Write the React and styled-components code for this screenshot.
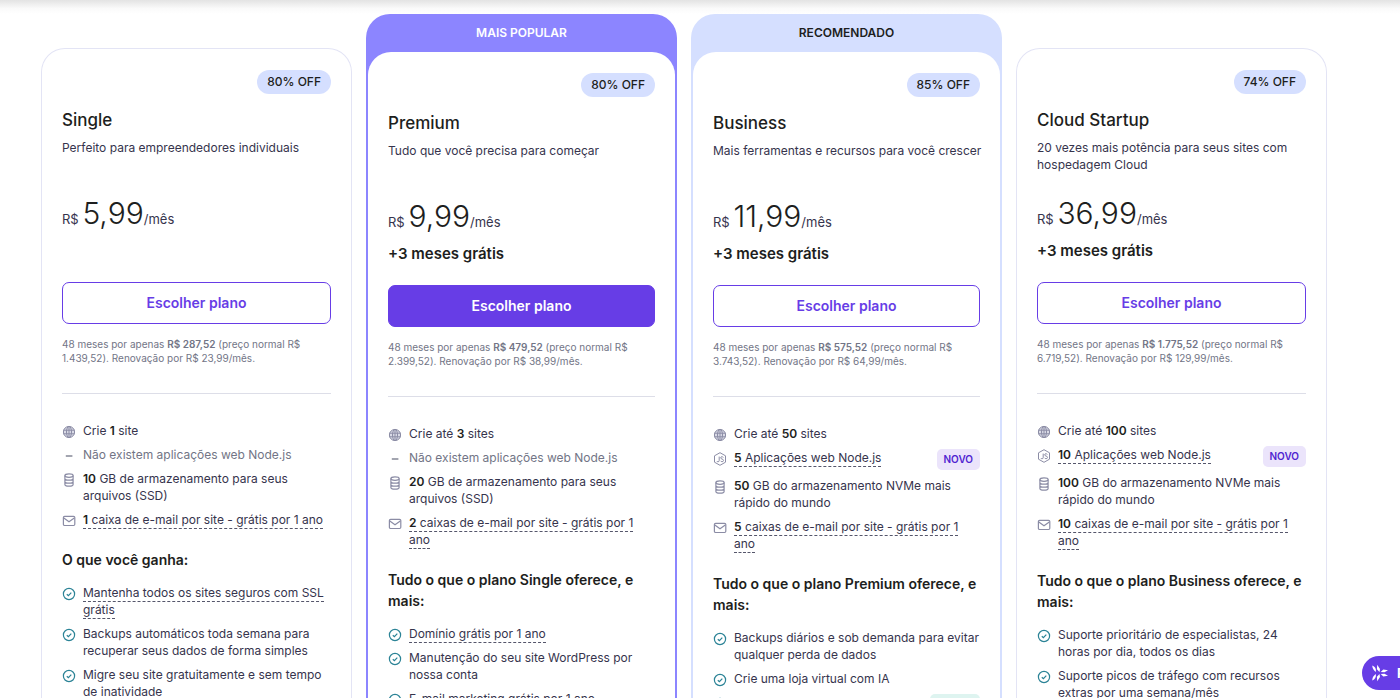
import React from 'react';
import styled, { createGlobalStyle } from 'styled-components';

const Global = createGlobalStyle`
  *, *::before, *::after { box-sizing: border-box; }
  html { scrollbar-width: none; }
  body {
    margin: 0;
    background: #fff;
    color: #1d1e20;
    font-family: Inter, "Liberation Sans", sans-serif;
    overflow-x: hidden;
  }
  h2, h3, p, ul { margin: 0; padding: 0; }
  ul { list-style: none; }
`;

const TopShade = styled.div`
  height: 14px;
  background: linear-gradient(#e3e3e3, #fafafa 60%, #ffffff);
`;

const Plans = styled.main`
  display: grid;
  grid-template-columns: repeat(4, minmax(0, 1fr));
  gap: 14px;
  padding: 0 73px 40px 41px;
`;

const Column = styled.section`
  padding-top: ${(p) => (p.$framed ? 0 : 34)}px;
  display: flex;
`;

const Frame = styled.div`
  flex: 1;
  min-width: 0;
  display: flex;
  flex-direction: column;
  border-radius: 24px;
  padding: ${(p) => (p.$tone ? '0 2px 2px' : '1px')};
  background: ${(p) => p.$tone || '#e3e4f5'};
`;

const Ribbon = styled.div`
  height: 38px;
  line-height: 38px;
  text-align: center;
  font-size: 12px;
  font-weight: 600;
  color: ${(p) => p.$color};
`;

const Card = styled.div`
  flex: 1;
  background: #fff;
  border-radius: 23px;
  padding: 21px 20px 40px;
`;

const Discount = styled.div`
  width: fit-content;
  margin-left: auto;
  height: 24px;
  line-height: 24px;
  padding: 0 10px;
  border-radius: 12px;
  background: #d5dfff;
  font-size: 12px;
  font-weight: 500;
`;

const Name = styled.h2`
  margin-top: 14px;
  font-size: 17px;
  line-height: 24px;
  font-weight: 500;
`;

const Description = styled.p`
  margin-top: 7px;
  margin-right: -10px;
  min-height: 34px;
  font-size: 12px;
  line-height: 17px;
  color: #36344d;
`;

const Price = styled.p`
  margin-top: 20px;
  font-size: 13px;
  line-height: 40px;
  color: #36344d;
`;

const Amount = styled.span`
  font-size: 30px;
  font-weight: 300;
  color: #1d1e20;
`;

const Bonus = styled.p`
  min-height: 24px;
  font-size: 15px;
  line-height: 24px;
  font-weight: 600;
`;

const Choose = styled.button`
  display: block;
  width: 100%;
  height: 42px;
  margin-top: 19px;
  border: 1px solid #673de6;
  border-radius: 7px;
  background: ${(p) => (p.$solid ? '#673de6' : '#fff')};
  color: ${(p) => (p.$solid ? '#fff' : '#673de6')};
  font: 600 14px/20px Inter, "Liberation Sans", sans-serif;
  cursor: pointer;
`;

const Terms = styled.p`
  margin-top: 13px;
  padding-bottom: 28px;
  border-bottom: 1px solid #dddee8;
  font-size: 10px;
  line-height: 14px;
  color: #727586;
  b { font-weight: 600; }
`;

const Features = styled.ul`
  display: flex;
  flex-direction: column;
  gap: 7px;
  margin-top: ${(p) => p.$top}px;
`;

const Feature = styled.li`
  display: flex;
  align-items: flex-start;
  gap: 7px;
  font-size: 12px;
  line-height: 17px;
  color: ${(p) => (p.$muted ? '#727586' : '#36344d')};
  svg { flex: none; margin-top: 3px; }
  b { font-weight: 600; color: #1d1e20; }
`;

const FeatureText = styled.span`
  min-width: 0;
  flex: 1;
  > span {
    padding-bottom: 1px;
    border-bottom: ${(p) => (p.$hint ? '1px dashed #55566b' : 'none')};
  }
`;

const Tag = styled.span`
  height: 21px;
  line-height: 21px;
  padding: 0 7px;
  border-radius: 5px;
  font-size: 10px;
  font-weight: 600;
  background: ${(p) => (p.$teal ? '#def4f0' : '#ebe4fb')};
  color: ${(p) => (p.$teal ? '#00795f' : '#5025d1')};
`;

const ListTitle = styled.h3`
  margin-top: 21px;
  font-size: 14px;
  line-height: 21px;
  font-weight: 600;
`;

const Ask = styled.button`
  position: fixed;
  left: calc(100% - 38px);
  bottom: 8px;
  display: flex;
  align-items: center;
  gap: 8px;
  height: 34px;
  padding: 0 16px 0 9px;
  border: 0;
  border-radius: 17px;
  background: #673de6;
  color: #fff;
  font: 700 13px/20px Inter, "Liberation Sans", sans-serif;
  white-space: nowrap;
`;

function Icon({ kind }) {
  const common = { width: 14, height: 14, viewBox: '0 0 14 14', fill: 'none', stroke: '#8b8ca5', strokeWidth: 1.1, 'aria-hidden': true };
  if (kind === 'globe')
    return (
      <svg {...common} strokeWidth="1">
        <circle cx="7" cy="7" r="5.6" fill="#d9dae6" />
        <ellipse cx="7" cy="7" rx="2.5" ry="5.6" />
        <path d="M1.4 5.2h11.2M1.4 8.8h11.2M7 1.4v11.2" />
      </svg>
    );
  if (kind === 'dash')
    return (
      <svg {...common} stroke="#727586" strokeWidth="1.3"><path d="M3.8 7h6.6" /></svg>
    );
  if (kind === 'disk')
    return (
      <svg {...common} strokeWidth="1.2">
        <ellipse cx="7" cy="2.6" rx="4.1" ry="1.7" />
        <path d="M2.9 2.6v8.8c0 1 1.8 1.7 4.1 1.7s4.1-.7 4.1-1.7V2.6M2.9 5.5c0 1 1.8 1.7 4.1 1.7s4.1-.7 4.1-1.7M2.9 8.4c0 1 1.8 1.7 4.1 1.7s4.1-.7 4.1-1.7" />
      </svg>
    );
  if (kind === 'mail')
    return (
      <svg {...common} strokeWidth="1.2">
        <rect x="1.4" y="2.3" width="11.4" height="9.2" rx="1.2" />
        <path d="M1.8 3.9 7 7.7l5.3-3.8" />
      </svg>
    );
  if (kind === 'node')
    return (
      <svg {...common} strokeWidth="1">
        <path d="M7 .7 12.5 3.8v6.4L7 13.3 1.5 10.2V3.8Z" strokeLinejoin="round" />
        <path d="M6.2 4.6v3.900c0 .9-.5 1.300-1.200 1.300-.6 0-1-.3-1.200-.8M10.300 5.500c-.3-.6-.8-.8-1.300-.8-.8 0-1.300.4-1.300 1.100 0 1.700 2.800.8 2.800 2.600 0 .8-.6 1.300-1.400 1.300-.7 0-1.300-.3-1.500-.9" />
      </svg>
    );
  return (
    <svg {...common} stroke="#2b8396" strokeWidth="1.2">
      <circle cx="7" cy="7" r="5.6" />
      <path d="M4.8 7.2 6.4 8.7 9.3 5.7" />
    </svg>
  );
}

const check = (text, hint, tag) => ({ icon: 'check', text, hint, tag });
const noNode = { icon: 'dash', text: 'Não existem aplicações web Node.js', muted: true };

const plans = [
  {
    name: 'Single', off: '80% OFF', description: 'Perfeito para empreendedores individuais',
    price: '5,99', total: 'R$ 287,52', normal: '1.439,52', renewal: '23,99',
    base: [
      { icon: 'globe', text: <>Crie <b>1</b> site</> },
      noNode,
      { icon: 'disk', text: <><b>10</b> GB de armazenamento para seus arquivos (SSD)</> },
      { icon: 'mail', text: <><b>1</b> caixa de e-mail por site - grátis por 1 ano</>, hint: true },
    ],
    title: 'O que você ganha:',
    extra: [
      check('Mantenha todos os sites seguros com SSL grátis', true),
      check('Backups automáticos toda semana para recuperar seus dados de forma simples'),
      check('Migre seu site gratuitamente e sem tempo de inatividade'),
    ],
  },
  {
    name: 'Premium', off: '80% OFF', description: 'Tudo que você precisa para começar',
    ribbon: 'MAIS POPULAR', tone: '#8c85ff', ribbonColor: '#fff', solid: true, bonus: true,
    price: '9,99', total: 'R$ 479,52', normal: '2.399,52', renewal: '38,99',
    base: [
      { icon: 'globe', text: <>Crie até <b>3</b> sites</> },
      noNode,
      { icon: 'disk', text: <><b>20</b> GB de armazenamento para seus arquivos (SSD)</> },
      { icon: 'mail', text: <><b>2</b> caixas de e-mail por site - grátis por 1 ano</>, hint: true },
    ],
    title: 'Tudo o que o plano Single oferece, e mais:',
    extra: [
      check('Domínio grátis por 1 ano', true),
      check('Manutenção do seu site WordPress por nossa conta'),
      check('E-mail marketing grátis por 1 ano', true),
    ],
  },
  {
    name: 'Business', off: '85% OFF', description: 'Mais ferramentas e recursos para você crescer',
    ribbon: 'RECOMENDADO', tone: '#d5dfff', ribbonColor: '#1d1e20', bonus: true,
    price: '11,99', total: 'R$ 575,52', normal: '3.743,52', renewal: '64,99',
    base: [
      { icon: 'globe', text: <>Crie até <b>50</b> sites</> },
      { icon: 'node', text: <><b>5</b> Aplicações web Node.js</>, hint: true, tag: 'NOVO' },
      { icon: 'disk', text: <><b>50</b> GB do armazenamento NVMe mais rápido do mundo</> },
      { icon: 'mail', text: <><b>5</b> caixas de e-mail por site - grátis por 1 ano</>, hint: true },
    ],
    title: 'Tudo o que o plano Premium oferece, e mais:',
    extra: [
      check('Backups diários e sob demanda para evitar qualquer perda de dados'),
      check('Crie uma loja virtual com IA'),
      check('Agente de IA', false, 'GRÁTIS'),
    ],
  },
  {
    name: 'Cloud Startup', off: '74% OFF', description: '20 vezes mais potência para seus sites com hospedagem Cloud',
    bonus: true, price: '36,99', total: 'R$ 1.775,52', normal: '6.719,52', renewal: '129,99',
    base: [
      { icon: 'globe', text: <>Crie até <b>100</b> sites</> },
      { icon: 'node', text: <><b>10</b> Aplicações web Node.js</>, hint: true, tag: 'NOVO' },
      { icon: 'disk', text: <><b>100</b> GB do armazenamento NVMe mais rápido do mundo</> },
      { icon: 'mail', text: <><b>10</b> caixas de e-mail por site - grátis por 1 ano</>, hint: true },
    ],
    title: 'Tudo o que o plano Business oferece, e mais:',
    extra: [
      check('Suporte prioritário de especialistas, 24 horas por dia, todos os dias'),
      check('Suporte picos de tráfego com recursos extras por uma semana/mês'),
    ],
  },
];

function FeatureList({ items, top }) {
  return (
    <Features $top={top}>
      {items.map((f, i) => (
        <Feature key={i} $muted={f.muted}>
          <Icon kind={f.icon} />
          <FeatureText $hint={f.hint}><span>{f.text}</span></FeatureText>
          {f.tag && <Tag $teal={f.icon === 'check'}>{f.tag}</Tag>}
        </Feature>
      ))}
    </Features>
  );
}

function Plan({ plan }) {
  const framed = Boolean(plan.ribbon);
  return (
    <Column $framed={framed}>
      <Frame $tone={plan.tone}>
        {framed && <Ribbon $color={plan.ribbonColor}>{plan.ribbon}</Ribbon>}
        <Card>
          <Discount>{plan.off}</Discount>
          <Name>{plan.name}</Name>
          <Description>{plan.description}</Description>
          <Price>R$ <Amount>{plan.price}</Amount>/mês</Price>
          <Bonus>{plan.bonus && '+3 meses grátis'}</Bonus>
          <Choose type="button" $solid={plan.solid}>Escolher plano</Choose>
          <Terms>
            48 meses por apenas <b>{plan.total}</b> (preço normal R$ {plan.normal}). Renovação por R$ {plan.renewal}/mês.
          </Terms>
          <FeatureList items={plan.base} top={28} />
          <ListTitle>{plan.title}</ListTitle>
          <FeatureList items={plan.extra} top={14} />
        </Card>
      </Frame>
    </Column>
  );
}

export default function App() {
  return (
    <>
      <Global />
      <TopShade />
      <Plans>
        {plans.map((plan) => <Plan key={plan.name} plan={plan} />)}
      </Plans>
      <Ask type="button">
        <svg width="18" height="18" viewBox="0 0 18 18" fill="#fff" aria-hidden="true">
          <path d="M1.200 1.500C4 2.500 5.300 4.500 4.900 7.900 2.700 6.500 1.400 4.500 1.200 1.500Z" />
          <path d="M1.200 16.500C4 15.500 5.300 13.500 4.900 10.100 2.700 11.500 1.400 13.500 1.200 16.500Z" />
          <path d="M6.200.8 9 5 8.500 8 5.900 5.300Z" />
          <path d="M6.200 17.200 9 13 8.500 10 5.900 12.700Z" />
          <path d="M9.700 7.900 12.300 5.400 17 6.200 13.500 8.300Z" />
          <path d="M9.700 10.100 12.300 12.600 17 11.800 13.500 9.700Z" />
        </svg>
        Pergunte
      </Ask>
    </>
  );
}
